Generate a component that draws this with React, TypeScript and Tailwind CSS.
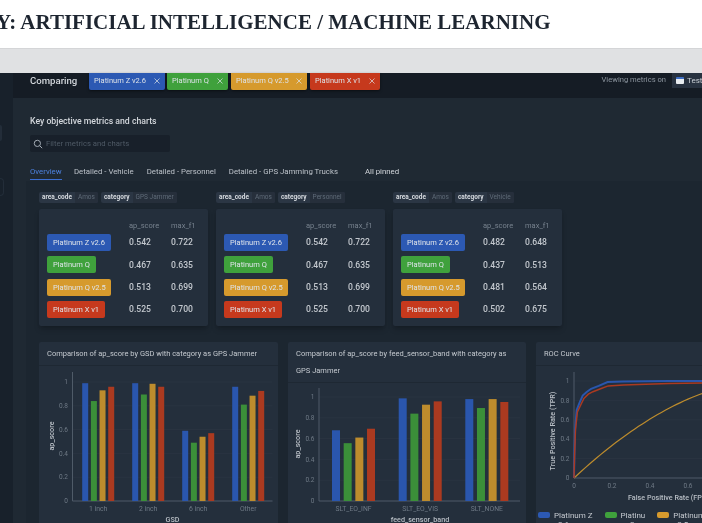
import type { ReactNode } from "react";

const BLUE = "#2a56ad";
const GREEN = "#3b8f39";
const GOLD = "#bd8c2d";
const RED = "#ab3a20";
const barColors = [BLUE, GREEN, GOLD, RED];

const tags = [
  { name: "Platinum Z v2.6", cls: "bg-[#2c59b3]", badge: "w-[64px]", tab: "w-[76px]", gap: "ml-0" },
  { name: "Platinum Q", cls: "bg-[#3fa13c]", badge: "w-[49px]", tab: "w-[61px]", gap: "ml-[2px]" },
  { name: "Platinum Q v2.5", cls: "bg-[#d69a2d]", badge: "w-[64px]", tab: "w-[76px]", gap: "ml-[3px]" },
  { name: "Platinum X v1", cls: "bg-[#c6391d]", badge: "w-[58px]", tab: "w-[70px]", gap: "ml-[3px]" },
];

const panels = [
  { category: "GPS Jammer", scores: [["0.542", "0.722"], ["0.467", "0.635"], ["0.513", "0.699"], ["0.525", "0.700"]] },
  { category: "Personnel", scores: [["0.542", "0.722"], ["0.467", "0.635"], ["0.513", "0.699"], ["0.525", "0.700"]] },
  { category: "Vehicle", scores: [["0.482", "0.648"], ["0.437", "0.513"], ["0.481", "0.564"], ["0.502", "0.675"]] },
];

const font = "Roboto, sans-serif";

function Chip({ k, v }: { k: string; v: string }) {
  return (
    <div className="flex h-[11px] items-center rounded-[2px] bg-[#2b3644] text-[6.5px] leading-none">
      <span className="px-[3px] font-bold text-[#d5d9de]">{k}</span>
      <span className="flex h-full items-center rounded-r-[2px] bg-[#262f3b] px-[3px] text-[#5f6b78]">{v}</span>
    </div>
  );
}

function ScorePanel({ category, scores }: { category: string; scores: string[][] }) {
  return (
    <div className="w-[169px]">
      <div className="flex h-[11px] gap-[3px]">
        <Chip k="area_code" v="Amos" />
        <Chip k="category" v={category} />
      </div>
      <div className="mt-[6px] h-[117px] rounded-[2px] bg-[#242f3c] pl-[8px] pt-[12px] shadow-md shadow-black/20">
        <div className="flex h-[9px] items-center text-[7.5px] leading-none text-[#77828e]">
          <span className="ml-[82px] w-[42px]">ap_score</span>
          <span>max_f1</span>
        </div>
        <div className="mt-[4px] flex flex-col gap-[5.4px]">
          {tags.map((tag, i) => (
            <div key={tag.name} className="flex h-[17px] items-center text-[8.6px] font-medium leading-none text-[#c3c8ce]">
              <span className="flex h-full w-[82px] shrink-0 items-center">
                <span className={`flex h-full items-center whitespace-nowrap rounded-[2px] pl-[6px] text-[7.5px] font-normal text-[#dfe4ea] ${tag.cls} ${tag.badge}`}>
                  {tag.name}
                </span>
              </span>
              <span className="w-[42px]">{scores[i][0]}</span>
              <span>{scores[i][1]}</span>
            </div>
          ))}
        </div>
      </div>
    </div>
  );
}

function Axes({ x0, y0, yTop, xEnd, scale, unit }: { x0: number; y0: number; yTop: number; xEnd: number; scale: number[]; unit: number }) {
  return (
    <g fontFamily={font} fontSize="6.5" fill="#6f7a86">
      {scale.map((v) => (
        <g key={v}>
          {v > 0 && <line x1={x0} x2={xEnd} y1={y0 - v * unit} y2={y0 - v * unit} stroke="#2c3744" strokeWidth="0.7" />}
          <text x={x0 - 4.5} y={y0 - v * unit + 2.2} textAnchor="end">{v}</text>
        </g>
      ))}
      <line x1={x0} x2={x0} y1={yTop} y2={y0} stroke="#4f5b68" strokeWidth="1" />
      <line x1={x0} x2={xEnd} y1={y0} y2={y0} stroke="#4f5b68" strokeWidth="1" />
    </g>
  );
}

function BarChart({
  x0, y0, yTop, xEnd, unit, barW, groups, labels, starts, step, xTitle, titleX, yMid, height,
}: {
  x0: number; y0: number; yTop: number; xEnd: number; unit: number; barW: number; groups: number[][]; labels: string[];
  starts: number[]; step: number; xTitle: string; titleX: number; yMid: number; height: number;
}) {
  return (
    <svg width="100%" height={height} viewBox={`0 0 238 ${height}`} className="block">
      <Axes x0={x0} y0={y0} yTop={yTop} xEnd={xEnd} unit={unit} scale={[0, 0.2, 0.4, 0.6, 0.8, 1]} />
      {groups.map((g, gi) => (
        <g key={gi}>
          {g.map((v, i) => (
            <rect key={i} x={starts[gi] + i * step} y={y0 - v * unit} width={barW} height={v * unit} fill={barColors[i]} />
          ))}
          <text x={starts[gi] + (3 * step + barW) / 2} y={y0 + 9.5} textAnchor="middle" fontFamily={font} fontSize="6.8" fill="#6f7a86">
            {labels[gi]}
          </text>
        </g>
      ))}
      <text x={titleX} y={y0 + 21} textAnchor="middle" fontFamily={font} fontSize="7.2" fontWeight="500" fill="#b9bfc6">{xTitle}</text>
      <text transform={`translate(${x0 - 19} ${yMid}) rotate(-90)`} textAnchor="middle" fontFamily={font} fontSize="7.2" fontWeight="500" fill="#b9bfc6">ap_score</text>
    </svg>
  );
}

function RocChart() {
  const x0 = 38;
  const y0 = 112;
  const px = (v: number) => x0 + v * 190;
  const py = (v: number) => y0 - v * 97;
  const line = (pts: number[][]) => pts.map(([a, b]) => `${px(a).toFixed(1)},${py(b).toFixed(1)}`).join(" ");
  const top = [[0, 0], [0.002, 0.25], [0.006, 0.5], [0.014, 0.7], [0.03, 0.78], [0.046, 0.85], [0.065, 0.885], [0.09, 0.92], [0.13, 0.95], [0.177, 0.99], [0.26, 0.995], [0.5, 1], [0.9, 1]];
  const low = [[0, 0], [0.003, 0.25], [0.008, 0.5], [0.018, 0.68], [0.035, 0.75], [0.052, 0.82], [0.075, 0.865], [0.1, 0.89], [0.14, 0.92], [0.18, 0.95], [0.26, 0.96], [0.5, 0.975], [0.9, 0.985]];
  const gold = Array.from({ length: 41 }, (_, i) => {
    const x = i / 50;
    return [x, 1 - Math.pow(1 - x, 1.83)];
  });
  return (
    <svg width="167" height="145" viewBox="0 0 167 145" className="block">
      <Axes x0={x0} y0={y0} yTop={6} xEnd={167} unit={97} scale={[0, 0.2, 0.4, 0.6, 0.8, 1]} />
      {[0, 0.2, 0.4, 0.6].map((v) => (
        <text key={v} x={px(v)} y={y0 + 10} textAnchor="middle" fontFamily={font} fontSize="6.5" fill="#6f7a86">{v}</text>
      ))}
      <polyline points={line(gold)} fill="none" stroke={GOLD} strokeWidth="1.2" />
      <polyline points={line(top)} fill="none" stroke={BLUE} strokeWidth="2" />
      <polyline points={line(low)} fill="none" stroke={RED} strokeWidth="1.5" />
      <text x="92" y="134" fontFamily={font} fontSize="7.2" fontWeight="500" fill="#b9bfc6">False Positive Rate (FPR)</text>
      <text transform={`translate(${x0 - 19} 65) rotate(-90)`} textAnchor="middle" fontFamily={font} fontSize="7.2" fontWeight="500" fill="#b9bfc6">True Positive Rate (TPR)</text>
    </svg>
  );
}

function Card({ title, children, className }: { title: ReactNode; children: ReactNode; className: string }) {
  return (
    <div className={`shrink-0 rounded-t-[2px] bg-[#242f3c] ${className}`}>
      <div className="border-b border-[#1e2833] px-[8px] py-[3px] text-[7.5px] leading-[17px] text-[#c5cad0]">{title}</div>
      {children}
    </div>
  );
}

export default function App() {
  return (
    <div className="h-[523px] w-[702px] overflow-hidden bg-white" style={{ fontFamily: font }}>
      <div className="flex h-[48px] items-start overflow-hidden pt-[10px] font-['Liberation_Serif',serif] text-[21px] font-bold leading-[24px] text-[#1d2530] blur-[0.3px]">
        <span className="-ml-[4px] whitespace-nowrap">Y: ARTIFICIAL INTELLIGENCE / MACHINE LEARNING</span>
      </div>
      <div className="h-[25px] border-t border-[#d4d5d7] bg-[#e0e1e3]" />

      <div className="flex h-[450px] bg-[#151c25] blur-[0.35px]">
        <div className="relative w-[13px] shrink-0 bg-[#18212b]">
          <div className="absolute left-0 top-[52px] h-[16px] w-[2px] rounded-r bg-[#232d39]" />
          <div className="absolute left-0 top-[105px] h-[18px] w-[4px] rounded-r-full border border-l-0 border-[#232d39]" />
        </div>
        <div className="min-w-0 flex-1">
          <div className="flex h-[25px] items-start bg-[#151c25]">
            <span className="ml-[17px] mt-[2px] w-[59px] shrink-0 text-[9.6px] font-medium leading-[12px] text-[#d3d7dc]">Comparing</span>
            {tags.map((t) => (
              <div key={t.name} className={`flex h-[17px] shrink-0 items-center justify-between rounded-b-[2px] pb-[2px] pl-[5px] pr-[5px] text-[7.5px] text-[#dde2e8] shadow-sm shadow-black/40 ${t.cls} ${t.tab} ${t.gap}`}>
                <span className="whitespace-nowrap">{t.name}</span>
                <svg width="6" height="6" viewBox="0 0 6 6" stroke="currentColor" strokeWidth="0.7"><path d="M0.5 0.5 5.5 5.5M5.5 0.5 0.5 5.5" /></svg>
              </div>
            ))}
            <span className="ml-auto mt-[1px] text-[7.6px] leading-[12px] text-[#8d96a0]">Viewing metrics on</span>
            <div className="ml-[6px] flex h-[15px] w-[30px] items-center gap-[3px] bg-[#283240] pl-[4px]">
              <span className="h-[7px] w-[8px] shrink-0 rounded-[1px] border-t-2 border-[#3f6fc4] bg-[#e8ecf0]" />
              <span className="text-[8px] text-[#c9ced4]">Test</span>
            </div>
          </div>

          <div className="h-[425px] bg-[#1f2933] pl-[17px] pt-[18px]">
            <div className="whitespace-nowrap text-[8.7px] font-medium leading-[10px] text-[#d3d7dc]">Key objective metrics and charts</div>
            <div className="mt-[9px] flex h-[17px] w-[140px] items-center gap-[3px] rounded-[2px] bg-[#18202a] pl-[3px] text-[7.7px] text-[#4f5a66]">
              <svg width="10" height="10" viewBox="0 0 24 24" fill="none" stroke="#a3abb4" strokeWidth="2.4"><circle cx="10.5" cy="10.5" r="7.5" /><path d="m16 16 6 6" /></svg>
              Filter metrics and charts
            </div>
            <div className="mt-[14px] flex h-[15px] items-start whitespace-nowrap text-[7.8px] leading-[12px] text-[#bcc2c9]">
              <span className="w-[32px] border-b border-[#3c6ed0] pb-[1px] text-[#4d82e0]">Overview</span>
              <span className="ml-[12px]">Detailed - Vehicle</span>
              <span className="ml-[13px]">Detailed - Personnel</span>
              <span className="ml-[13px]">Detailed - GPS Jamming Trucks</span>
              <span className="ml-[27px] text-[#d3d7dc]">All pinned</span>
            </div>

            <div className="-ml-[4px] h-[352px] overflow-hidden bg-[#1c2630] pl-[13px] pt-[11px]">
              <div className="flex gap-[8px]">
                {panels.map((p) => (
                  <ScorePanel key={p.category} category={p.category} scores={p.scores} />
                ))}
              </div>

              <div className="mt-[16px] flex gap-[10px]">
                <Card className="w-[239px]" title="Comparison of ap_score by GSD with category as GPS Jammer">
                  <BarChart
                    x0={33} y0={135} yTop={6} xEnd={233} unit={119} barW={6} height={160}
                    groups={[[0.99, 0.84, 0.93, 0.96], [0.99, 0.895, 0.985, 0.96], [0.59, 0.49, 0.54, 0.57], [0.96, 0.81, 0.885, 0.925]]}
                    labels={["1 inch", "2 inch", "6 inch", "Other"]} starts={[42.7, 92.7, 142.7, 192.7]} step={8.67}
                    xTitle="GSD" titleX={133} yMid={70}
                  />
                </Card>
                <Card
                  className="w-[238px]"
                  title={<>Comparison of ap_score by feed_sensor_band with category as<br />GPS Jammer</>}
                >
                  <BarChart
                    x0={31} y0={118} yTop={5} xEnd={232} unit={104} barW={8} height={144}
                    groups={[[0.68, 0.556, 0.61, 0.695], [0.987, 0.84, 0.926, 0.958], [0.98, 0.894, 0.98, 0.952]]}
                    labels={["SLT_EO_INF", "SLT_EO_VIS", "SLT_NONE"]} starts={[44, 110.7, 177.3]} step={11.67}
                    xTitle="feed_sensor_band" titleX={132} yMid={61}
                  />
                </Card>
                <Card className="w-[175px]" title="ROC Curve">
                  <RocChart />
                  <div className="ml-[2px] flex whitespace-nowrap text-[8px] leading-[9px] text-[#c5cad0]">
                    <span className="flex gap-[4px]">
                      <i className="mt-[1px] h-[6px] w-[12px] rounded-[2px] bg-[#2c59b3]" />
                      <span>Platinum Z<br />v2.6</span>
                    </span>
                    <span className="ml-[12px] flex gap-[4px]">
                      <i className="mt-[1px] h-[6px] w-[12px] rounded-[2px] bg-[#3fa13c]" />
                      <span>Platinu<br />m Q</span>
                    </span>
                    <span className="ml-[12px] flex gap-[4px]">
                      <i className="mt-[1px] h-[6px] w-[12px] rounded-[2px] bg-[#d69a2d]" />
                      <span>Platinum Q<br />v2.5</span>
                    </span>
                  </div>
                </Card>
              </div>
            </div>
          </div>
        </div>
      </div>
    </div>
  );
}
